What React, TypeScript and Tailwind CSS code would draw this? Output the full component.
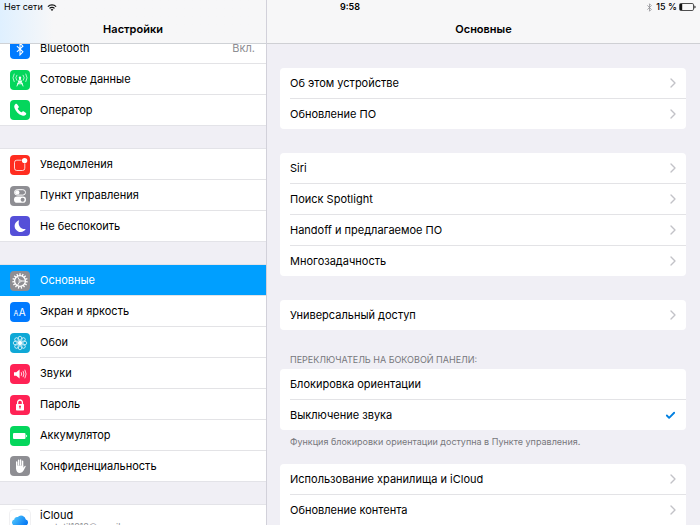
import React from 'react';
import { Bluetooth, Check, ChevronRight } from 'lucide-react';

interface SidebarItem {
  id: string;
  label: string;
  /** Цвет плитки под иконкой */
  tile: string;
  icon: React.ReactNode;
  value?: string;
}

const PETALS = [0, 45, 90, 135, 180, 225, 270, 315];
const TEETH = [0, 24, 48, 72, 96, 120, 144, 168, 192, 216, 240, 264, 288, 312, 336];

const BluetoothIcon = () => (
  <path d="M6.9 7.2l6 5.6L10 15.8V4.2l2.9 3-6 5.6" fill="none" stroke="#fff" strokeWidth="1.1" />
);

const CellularIcon = () => (
  <g fill="none" stroke="#fff" strokeWidth="0.7" strokeLinecap="round">
    <circle cx="10" cy="7.8" r="1.2" fill="#fff" stroke="none" />
    <path d="M10 8l-3 8M10 8l3 8M8.8 11.4h2.4M7.9 13.8h4.2M8.8 11.4l3.4 2.4M11.2 11.4l-3.4 2.4" strokeWidth="0.9" />
    <path d="M6.8 5.2a4 4 0 000 5.2M13.2 5.2a4 4 0 010 5.2" />
    <path d="M4.100 4a7 7 0 000 7.600M15.900 4a7 7 0 010 7.600" />
  </g>
);

const PhoneIcon = () => (
  <path
    fill="#fff"
    d="M5.3 4.3c.8-.7 1.5-.6 2 .1l1.3 1.9c.4.6.3 1.2-.3 1.7-.6.5-.6.8-.3 1.3.8 1.2 1.6 2 2.8 2.8.5.3.8.3 1.3-.3.5-.6 1.1-.7 1.7-.3l1.9 1.3c.7.5.8 1.2.1 2-1 1.100-2.200 1.300-3.600.8-3.800-1.400-6.300-3.900-7.700-7.700-.5-1.400-.3-2.600.8-3.600z"
  />
);

const NotificationsIcon = () => (
  <g>
    <path
      d="M11.5 5.200H6.800a2.300 2.300 0 00-2.300 2.300v5.700a2.300 2.300 0 002.300 2.300h5.700a2.300 2.300 0 002.300-2.300V8.500"
      fill="none"
      stroke="#fff"
      strokeWidth="0.8"
    />
    <circle cx="14.6" cy="5.6" r="2.7" fill="#fff" />
  </g>
);

const ControlsIcon = () => (
  <g>
    <rect x="4.5" y="3.7" width="11" height="5.4" rx="2.7" fill="none" stroke="#fff" strokeWidth="1" />
    <circle cx="7.3" cy="6.4" r="2.2" fill="#fff" />
    <rect x="4" y="10.6" width="12" height="6.2" rx="3.1" fill="#fff" />
    <circle cx="12.6" cy="13.7" r="2" fill="#8e8e93" />
  </g>
);

const MoonIcon = () => (
  <path fill="#fff" d="M9.2 4.300a5.900 5.900 0 106.500 8.600c-4.900 1.200-8.400-3.800-6.500-8.600z" />
);

const GearIcon = () => (
  <g stroke="#fff" fill="none">
    {TEETH.map((angle) => (
      <path key={angle} d="M10 2.300v2.200" strokeWidth="1.3" transform={`rotate(${angle} 10 10)`} />
    ))}
    <circle cx="10" cy="10" r="5.4" strokeWidth="1.3" />
    <path d="M10 10h5M10 10L7.500 5.700M10 10l-2.500 4.300" strokeWidth="0.9" />
    <circle cx="10" cy="10" r="1.1" strokeWidth="0.7" fill="#8e8e93" />
  </g>
);

const DisplayIcon = () => (
  <g fill="#fff" fontFamily="Inter, sans-serif">
    <text x="3.6" y="14" fontSize="7">A</text>
    <text x="8.8" y="14" fontSize="10">A</text>
  </g>
);

const WallpaperIcon = () => (
  <g fill="none" stroke="#fff" strokeWidth="0.7">
    {PETALS.map((angle) => (
      <ellipse key={angle} cx="10" cy="6.1" rx="2" ry="2.9" transform={`rotate(${angle} 10 10)`} />
    ))}
    <circle cx="10" cy="10" r="1.4" fill="#fff" />
  </g>
);

const SoundIcon = () => (
  <g>
    <path fill="#fff" d="M4 8.200h2.200L9.600 5.600v8.800l-3.400-2.600H4z" />
    <path
      d="M11.200 8.200q1 1.800 0 3.600M13 6.900q1.800 3.100 0 6.200M14.800 5.700q2.600 4.300 0 8.600"
      fill="none"
      stroke="#fff"
      strokeWidth="0.8"
    />
  </g>
);

const LockIcon = () => (
  <g>
    <path d="M7.600 9.500V7.400a2.400 2.400 0 014.800 0v2.100" fill="none" stroke="#fff" strokeWidth="1.3" />
    <rect x="6" y="8.9" width="8" height="6.6" rx="0.7" fill="#fff" />
    <circle cx="10" cy="11.4" r="1" fill="#ff2255" />
    <path d="M10 11.500v2.300" stroke="#ff2255" strokeWidth="0.9" />
  </g>
);

const BatteryIcon = () => (
  <g fill="#fff">
    <rect x="3" y="7" width="12.5" height="6" rx="1" />
    <path d="M16.100 8.800q1.100.2 1.100 1.200t-1.100 1.200z" />
  </g>
);

const HandIcon = () => (
  <g stroke="#fff" strokeLinecap="round" strokeWidth="1.4">
    <path d="M6.700 10.500V6M8.600 9V4.300M10.600 9V4M12.600 10V5.300" />
    <path
      d="M6 9.500h7.300v2.200l1.500-1.800q1-.3.900.7l-2.100 4q-1.100 2.400-3.700 2.400-3.400 0-3.900-4.200z"
      fill="#fff"
      stroke="none"
    />
  </g>
);

const CloudIcon = () => (
  <g>
    <defs>
      <linearGradient id="cloud" x1="0" y1="0" x2="1" y2="0.5">
        <stop offset="0" stopColor="#5ad1fb" />
        <stop offset="1" stopColor="#0a7df5" />
      </linearGradient>
    </defs>
    <path
      fill="url(#cloud)"
      d="M5 15.500a3.100 3.100 0 01-.7-6.100 2.600 2.600 0 013.400-2.300 4.700 4.700 0 018.100 2.500 3 3 0 01-.5 5.900z"
    />
  </g>
);

const SIDEBAR: SidebarItem[][] = [
  [
    { id: 'bluetooth', label: 'Bluetooth', tile: 'bg-[#007aff]', icon: <BluetoothIcon />, value: 'Вкл.' },
    { id: 'cellular', label: 'Сотовые данные', tile: 'bg-[#04d65c]', icon: <CellularIcon /> },
    { id: 'carrier', label: 'Оператор', tile: 'bg-[#04d65c]', icon: <PhoneIcon /> },
  ],
  [
    { id: 'notifications', label: 'Уведомления', tile: 'bg-[#ff2d20]', icon: <NotificationsIcon /> },
    { id: 'controls', label: 'Пункт управления', tile: 'bg-[#8e8e93]', icon: <ControlsIcon /> },
    { id: 'dnd', label: 'Не беспокоить', tile: 'bg-[#554fd8]', icon: <MoonIcon /> },
  ],
  [
    { id: 'general', label: 'Основные', tile: 'bg-[#8e8e93]', icon: <GearIcon /> },
    { id: 'display', label: 'Экран и яркость', tile: 'bg-[#007aff]', icon: <DisplayIcon /> },
    { id: 'wallpaper', label: 'Обои', tile: 'bg-[#0fa8d6]', icon: <WallpaperIcon /> },
    { id: 'sounds', label: 'Звуки', tile: 'bg-[#ff2255]', icon: <SoundIcon /> },
    { id: 'passcode', label: 'Пароль', tile: 'bg-[#ff2255]', icon: <LockIcon /> },
    { id: 'battery', label: 'Аккумулятор', tile: 'bg-[#04d65c]', icon: <BatteryIcon /> },
    { id: 'privacy', label: 'Конфиденциальность', tile: 'bg-[#8e8e93]', icon: <HandIcon /> },
  ],
];

function IconTile({ className, children }: { className: string; children: React.ReactNode }) {
  return (
    <svg viewBox="0 0 20 20" className={`size-5 shrink-0 rounded ${className}`} aria-hidden="true">
      {children}
    </svg>
  );
}

function SidebarRow({ item, selected, last }: { item: SidebarItem; selected: boolean; last: boolean }) {
  return (
    <li className={last ? 'h-[30px]' : 'h-[31px]'}>
      <button
        type="button"
        className={`flex h-full w-full items-center gap-[10px] pl-[10px] text-left ${
          selected ? 'bg-[#009fff] text-white' : 'text-black'
        }`}
      >
        <IconTile className={item.tile}>{item.icon}</IconTile>
        <span
          className={`flex h-full flex-1 items-center justify-between pr-[11px] ${
            last ? '' : 'border-b border-[#e3e3e6]'
          }`}
        >
          {item.label}
          {item.value && <span className="text-[#8e8e93]">{item.value}</span>}
        </span>
      </button>
    </li>
  );
}

function Group({ children }: { children: React.ReactNode }) {
  return <ul className="shrink-0 overflow-hidden rounded bg-white">{children}</ul>;
}

function NavRow({ label, last = false }: { label: string; last?: boolean }) {
  return (
    <li className={`pl-[10px] ${last ? 'h-[30px]' : 'h-[31px]'}`}>
      <button
        type="button"
        className={`flex h-full w-full items-center justify-between pr-[5px] text-left ${
          last ? '' : 'border-b border-[#e3e3e6]'
        }`}
      >
        {label}
        <ChevronRight className="size-4 text-[#c2c2c7]" strokeWidth={2} />
      </button>
    </li>
  );
}

function OptionRow({ label, checked = false, last = false }: { label: string; checked?: boolean; last?: boolean }) {
  return (
    <li className={`pl-[10px] ${last ? 'h-[30px]' : 'h-[31px]'}`}>
      <label
        className={`flex h-full items-center justify-between pr-[10px] ${last ? '' : 'border-b border-[#e3e3e6]'}`}
      >
        {label}
        <input type="radio" name="side-switch" defaultChecked={checked} className="peer sr-only" />
        <Check className="invisible size-[11px] text-[#007fe0] peer-checked:visible" strokeWidth={4} />
      </label>
    </li>
  );
}

function StatusBar() {
  return (
    <div className="absolute inset-x-0 top-0 z-10 grid h-[14px] grid-cols-3 items-center px-1 text-[9px] leading-3 font-medium text-black">
      <div className="flex items-center gap-1 font-normal">
        Нет сети
        <svg viewBox="0 0 16 12" className="h-[7px] w-[10px]" fill="none" stroke="#111" strokeWidth="2.2" aria-hidden="true">
          <path d="M1 4.500a10 10 0 0114 0M3.700 7.500a6 6 0 018.600 0" />
          <path d="M8 12L5.600 9.500a3.500 3.500 0 014.800 0z" fill="#111" stroke="none" />
        </svg>
      </div>
      <time className="text-center font-semibold">9:58</time>
      <div className="flex items-center justify-end gap-[2px]">
        <Bluetooth className="size-[9px] text-[#8e8e93]" strokeWidth={2} />
        15 %
        <svg viewBox="0 0 17 8" className="h-2 w-[17px]" aria-hidden="true">
          <rect x="0.5" y="0.5" width="14" height="7" rx="1.3" fill="none" stroke="#222" strokeWidth="0.8" />
          <rect x="1" y="1" width="2.2" height="6" fill="#111" />
          <path d="M15.400 2.500q1.200.3 1.200 1.500t-1.200 1.500z" fill="#222" />
        </svg>
      </div>
    </div>
  );
}

export default function App() {
  return (
    <div className="relative flex h-screen overflow-hidden bg-[#f0eff5] font-['Inter','Liberation_Sans',sans-serif] text-[11px] leading-4 text-black">
      <StatusBar />

      {/* Список разделов */}
      <aside className="flex w-[38%] shrink-0 flex-col">
        <header className="h-11 shrink-0 border-b border-[#cfd2d6] bg-[#f7f7f8] bg-linear-to-r from-[#dff0ff] to-[#f7f7f8] to-20% pt-[21px]">
          <h1 className="text-center font-semibold">Настройки</h1>
        </header>
        <nav className="min-h-0 flex-1 overflow-hidden">
          <div className="-mt-3 flex flex-col gap-[22px]">
            {SIDEBAR.map((items) => (
              <ul key={items[0].id} className="border-y border-[#e3e3e8] bg-white">
                {items.map((item, i) => (
                  <SidebarRow
                    key={item.id}
                    item={item}
                    selected={item.id === 'general'}
                    last={i === items.length - 1}
                  />
                ))}
              </ul>
            ))}
            <button
              type="button"
              className="flex items-start gap-[10px] border-y border-[#e3e3e8] bg-white px-[10px] pt-[2px] pb-2 text-left"
            >
              <span className="pt-[3px]">
                <IconTile className="bg-white ring-1 ring-[#f0f0f2]">
                  <CloudIcon />
                </IconTile>
              </span>
              <span className="flex flex-col">
                iCloud
                <span className="text-[9px] leading-2 text-[#8e8e93]">nastatil1218@gmail.com</span>
              </span>
            </button>
          </div>
        </nav>
      </aside>

      {/* Основные настройки */}
      <main className="flex min-w-0 flex-1 flex-col border-l border-[#d2d1da]">
        <header className="h-11 shrink-0 border-b border-[#cfd0d4] bg-[#f7f7f8] pt-[21px]">
          <h2 className="text-center font-semibold">Основные</h2>
        </header>
        <div className="flex min-h-0 flex-1 flex-col gap-6 overflow-hidden pt-6 pr-[14px] pl-[13px]">
          <Group>
            <NavRow label="Об этом устройстве" />
            <NavRow label="Обновление ПО" last />
          </Group>
          <Group>
            <NavRow label="Siri" />
            <NavRow label="Поиск Spotlight" />
            <NavRow label="Handoff и предлагаемое ПО" />
            <NavRow label="Многозадачность" last />
          </Group>
          <Group>
            <NavRow label="Универсальный доступ" last />
          </Group>
          <section className="-mb-2 flex shrink-0 flex-col">
            <h3 className="px-[10px] pb-[3px] text-[9px] leading-3 text-[#77777c] uppercase">
              Переключатель на боковой панели:
            </h3>
            <Group>
              <OptionRow label="Блокировка ориентации" />
              <OptionRow label="Выключение звука" checked last />
            </Group>
            <p className="px-[10px] pt-[6px] text-[9px] leading-3 text-[#77777c]">
              Функция блокировки ориентации доступна в Пункте управления.
            </p>
          </section>
          <Group>
            <NavRow label="Использование хранилища и iCloud" />
            <NavRow label="Обновление контента" />
            <NavRow label="Дата и время" last />
          </Group>
        </div>
      </main>
    </div>
  );
}
